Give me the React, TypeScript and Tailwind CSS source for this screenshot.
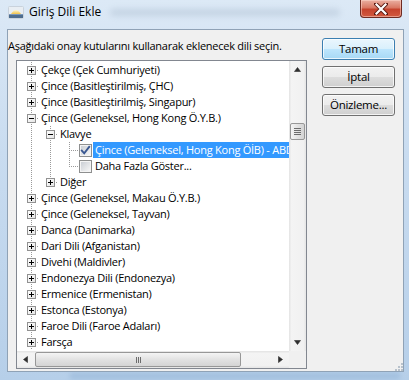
import React from "react";

const DOT = "#9a9a9a";

function V({ x, y1 = 0, y2 = 16 }: { x: number; y1?: number; y2?: number }) {
  return <line x1={x + 0.5} x2={x + 0.5} y1={y1} y2={y2} stroke={DOT} strokeDasharray="1 1" />;
}
function H({ x1, x2 }: { x1: number; x2: number }) {
  return <line x1={x1} x2={x2} y1={8.5} y2={8.5} stroke={DOT} strokeDasharray="1 1" />;
}
function Box({ cx, plus }: { cx: number; plus: boolean }) {
  return (
    <g>
      <rect x={cx - 4 + 0.5} y={4.5} width={8} height={8} fill="url(#bx)" stroke="#919191" />
      <line x1={cx - 2} x2={cx + 3} y1={8.5} y2={8.5} stroke="#000" />
      {plus && <line x1={cx + 0.5} x2={cx + 0.5} y1={6} y2={11} stroke="#000" />}
    </g>
  );
}

type Kind = "p" | "m" | "klavye" | "sel" | "daha" | "diger";

function Gutter({ kind }: { kind: Kind }) {
  const w = kind === "p" || kind === "m" ? 22 : kind === "klavye" || kind === "diger" ? 41 : 62;
  return (
    <svg width={w} height={16} className="shrink-0 block">
      <defs>
        <linearGradient id="bx" x1="0" y1="0" x2="1" y2="1">
          <stop offset="0" stopColor="#ffffff" />
          <stop offset="1" stopColor="#e4e4e4" />
        </linearGradient>
      </defs>
      <V x={14} />
      {(kind === "p" || kind === "m") && (
        <>
          <H x1={14} x2={22} />
          <Box cx={14} plus={kind === "p"} />
        </>
      )}
      {kind === "klavye" && (
        <>
          <V x={33} y1={0} y2={16} />
          <H x1={33} x2={41} />
          <Box cx={33} plus={false} />
        </>
      )}
      {kind === "diger" && (
        <>
          <V x={33} y1={0} y2={9} />
          <H x1={33} x2={41} />
          <Box cx={33} plus={true} />
        </>
      )}
      {(kind === "sel" || kind === "daha") && (
        <>
          <V x={33} />
          <V x={52} y1={0} y2={kind === "sel" ? 16 : 9} />
          <H x1={52} x2={62} />
        </>
      )}
    </svg>
  );
}

function CheckBox({ checked }: { checked: boolean }) {
  return (
    <svg width={13} height={13} className="shrink-0 block">
      <defs>
        <linearGradient id="cbi" x1="0" y1="0" x2="1" y2="1">
          <stop offset="0" stopColor="#cbcfd5" />
          <stop offset="1" stopColor="#f6f6f6" />
        </linearGradient>
      </defs>
      <rect x={0.5} y={0.5} width={12} height={12} fill="#f4f4f4" stroke="#8e8f8f" />
      <rect x={2} y={2} width={9} height={9} fill="url(#cbi)" />
      {checked && (
        <path d="M2.8 6.6 L5.2 9.3 L10.2 2.8" fill="none" stroke="#3a5892" strokeWidth={1.9} strokeLinecap="square" />
      )}
    </svg>
  );
}

const rows: { t: string; k: Kind; c?: boolean }[] = [
  { t: "Çekçe (Çek Cumhuriyeti)", k: "p" },
  { t: "Çince (Basitleştirilmiş, ÇHC)", k: "p" },
  { t: "Çince (Basitleştirilmiş, Singapur)", k: "p" },
  { t: "Çince (Geleneksel, Hong Kong Ö.Y.B.)", k: "m" },
  { t: "Klavye", k: "klavye" },
  { t: "Çince (Geleneksel, Hong Kong ÖİB) - ABD", k: "sel", c: true },
  { t: "Daha Fazla Göster...", k: "daha", c: false },
  { t: "Diğer", k: "diger" },
  { t: "Çince (Geleneksel, Makau Ö.Y.B.)", k: "p" },
  { t: "Çince (Geleneksel, Tayvan)", k: "p" },
  { t: "Danca (Danimarka)", k: "p" },
  { t: "Dari Dili (Afganistan)", k: "p" },
  { t: "Divehi (Maldivler)", k: "p" },
  { t: "Endonezya Dili (Endonezya)", k: "p" },
  { t: "Ermenice (Ermenistan)", k: "p" },
  { t: "Estonca (Estonya)", k: "p" },
  { t: "Faroe Dili (Faroe Adaları)", k: "p" },
  { t: "Farsça", k: "p" },
];

function Arrow({ dir }: { dir: "up" | "down" | "left" | "right" }) {
  const p =
    dir === "up"
      ? "M0.5 4.5 L3.5 0.5 L6.5 4.5 Z"
      : dir === "down"
      ? "M0.5 0.5 L3.5 4.5 L6.5 0.5 Z"
      : dir === "left"
      ? "M4.5 0.5 L0.5 3.5 L4.5 6.5 Z"
      : "M0.5 0.5 L4.5 3.5 L0.5 6.5 Z";
  const vert = dir === "up" || dir === "down";
  return (
    <svg width={vert ? 7 : 5} height={vert ? 5 : 7} className="block">
      <path d={p} fill="#2e2e2e" stroke="#2e2e2e" strokeWidth={0.6} />
    </svg>
  );
}

function Btn({ label, def }: { label: string; def?: boolean }) {
  return (
    <div
      className={
        "w-[73px] h-[22px] rounded-[3px] border flex items-center justify-center leading-none text-[11.5px] shadow-[inset_0_0_0_1px_rgba(255,255,255,0.75)] " +
        (def
          ? "border-[#3c7fb1] bg-[linear-gradient(#eaf6fd_0%,#d9f0fc_50%,#bee6fd_50%,#a7d9f5_100%)]"
          : "border-[#707070] bg-[linear-gradient(#f2f2f2_0%,#ebebeb_50%,#dddddd_50%,#cfcfcf_100%)]")
      }
    >
      {label}
    </div>
  );
}

export default function App() {
  return (
    <div className="w-[409px] h-[380px] overflow-hidden relative flex flex-col bg-[linear-gradient(180deg,#dce9f6_0%,#c9dcf0_40%,#b6cfe9_100%)] font-['Open_Sans','Noto_Sans',sans-serif] text-[11px] tracking-[-0.25px] text-black">
      {/* blurred glass background hints */}
      <div className="absolute left-[110px] top-[9px] w-[230px] h-[7px] rounded-full bg-[#8fa3b8] opacity-30 blur-[3px]" />
      <div className="absolute left-[70px] top-[372px] w-[330px] h-[8px] bg-[#9ab9da] opacity-60 blur-[2px]" />
      {/* Title bar */}
      <div className="h-[29px] shrink-0 flex items-start relative">
        <div className="flex items-center pl-[8px] pt-[4px] gap-[5px]">
          <svg width={16} height={16} className="block">
            <defs>
              <linearGradient id="ic" x1="0" y1="0" x2="0" y2="1">
                <stop offset="0" stopColor="#fff7d0" />
                <stop offset="1" stopColor="#f0c24a" />
              </linearGradient>
            </defs>
            <rect x={0.5} y={2.5} width={15} height={12} rx={1} fill="#e9eef3" stroke="#c9d2dc" />
            <path d="M3 10 Q8 2 13 10 Z" fill="url(#ic)" />
            <rect x={1} y={10} width={14} height={4} fill="#4e6d8f" />
            <rect x={1} y={10} width={14} height={1} fill="#7d9abb" />
          </svg>
          <span className="text-[12px] tracking-normal leading-none">Giriş Dili Ekle</span>
        </div>
        <div className="ml-auto mr-[7px] w-[42px] h-[18px] rounded-b-[4px] border border-t-0 border-[#6e2b22] bg-[linear-gradient(#eab0a2_0%,#d97864_45%,#c6432d_55%,#d25a3f_100%)] shadow-[inset_0_0_0_1px_rgba(255,220,210,0.5)] flex items-center justify-center">
          <svg width={14} height={12} className="block">
            <path d="M2 1 L12 11 M12 1 L2 11" stroke="#5a1a12" strokeWidth={4} strokeLinecap="square" />
            <path d="M2.5 1.5 L11.5 10.5 M11.5 1.5 L2.5 10.5" stroke="#ffffff" strokeWidth={2.2} strokeLinecap="square" />
          </svg>
        </div>
      </div>

      {/* Client */}
      <div className="ml-[7px] w-[397px] h-[343px] shrink-0 border border-[#8fa2b6] bg-[#f0f0f0] flex pt-[8px] relative">
        <div className="w-[299px] shrink-0 flex flex-col">
          <div className="h-[16px] leading-[16px] whitespace-nowrap">
            Aşağıdaki onay kutularını kullanarak eklenecek dili seçin.
          </div>
          <div className="mt-[6px] ml-[8px] w-[291px] h-[309px] border border-[#828790] bg-white flex flex-col">
            <div className="flex h-[290px]">
              <div className="w-[272px] h-[290px] overflow-hidden pt-[1px]">
                {rows.map((r, i) => (
                  <div key={i} className="h-[16px] flex items-center whitespace-nowrap">
                    <Gutter kind={r.k} />
                    {r.c !== undefined && <CheckBox checked={r.c} />}
                    <span
                      className={
                        "h-[16px] leading-[16px] px-[2px] " +
                        (r.c !== undefined ? "ml-[1px] " : "") +
                        (r.k === "sel" ? "bg-[#3399ff] text-white" : "")
                      }
                    >
                      {r.t}
                    </span>
                  </div>
                ))}
              </div>
              {/* vertical scrollbar */}
              <div className="w-[17px] h-[290px] flex flex-col bg-[linear-gradient(90deg,#e3e3e3_0%,#f4f4f4_15%,#f1f1f1_85%,#e5e5e5_100%)]">
                <div className="h-[17px] flex items-center justify-center">
                  <Arrow dir="up" />
                </div>
                <div className="flex-1 pt-[45px] pl-[1px]">
                  <div className="w-[15px] h-[17px] rounded-[2px] border border-[#979797] bg-[linear-gradient(90deg,#f4f4f4,#e2e2e2_50%,#d4d4d4)] flex flex-col items-center justify-center gap-[1px]">
                    <div className="w-[7px] h-[1px] bg-[#6c6c6c]" />
                    <div className="w-[7px] h-[1px] bg-[#6c6c6c]" />
                    <div className="w-[7px] h-[1px] bg-[#6c6c6c]" />
                    <div className="w-[7px] h-[1px] bg-[#6c6c6c]" />
                  </div>
                </div>
                <div className="h-[17px] flex items-center justify-center">
                  <Arrow dir="down" />
                </div>
              </div>
            </div>
            {/* horizontal scrollbar row */}
            <div className="flex h-[17px]">
              <div className="w-[272px] h-[17px] flex bg-[linear-gradient(180deg,#e3e3e3_0%,#f4f4f4_15%,#f1f1f1_85%,#e5e5e5_100%)]">
                <div className="w-[17px] h-[17px] flex items-center justify-center">
                  <Arrow dir="left" />
                </div>
                <div className="flex-1 pl-[1px] pt-[1px]">
                  <div className="w-[206px] h-[15px] rounded-[2px] border border-[#979797] bg-[linear-gradient(180deg,#f4f4f4,#e2e2e2_50%,#d4d4d4)] flex items-center justify-center gap-[1px]">
                    <div className="w-[1px] h-[6px] bg-[#6c6c6c]" />
                    <div className="w-[1px] h-[6px] bg-[#6c6c6c]" />
                    <div className="w-[1px] h-[6px] bg-[#6c6c6c]" />
                  </div>
                </div>
                <div className="w-[17px] h-[17px] flex items-center justify-center">
                  <Arrow dir="right" />
                </div>
              </div>
              <div className="w-[17px] h-[17px] bg-[#f0f0f0]" />
            </div>
          </div>
        </div>
        <div className="ml-[15px] flex flex-col gap-[6px]">
          <Btn label="Tamam" def />
          <Btn label="İptal" />
          <Btn label="Önizleme..." />
        </div>
        {/* resize grip */}
        <svg width={9} height={9} className="absolute right-[0px] bottom-[0px] block">
          {[
            [7, 1],
            [7, 4],
            [4, 4],
            [7, 7],
            [4, 7],
            [1, 7],
          ].map(([x, y], i) => (
            <rect key={i} x={x} y={y} width={2} height={2} fill="#b8c2cc" />
          ))}
        </svg>
      </div>
    </div>
  );
}
